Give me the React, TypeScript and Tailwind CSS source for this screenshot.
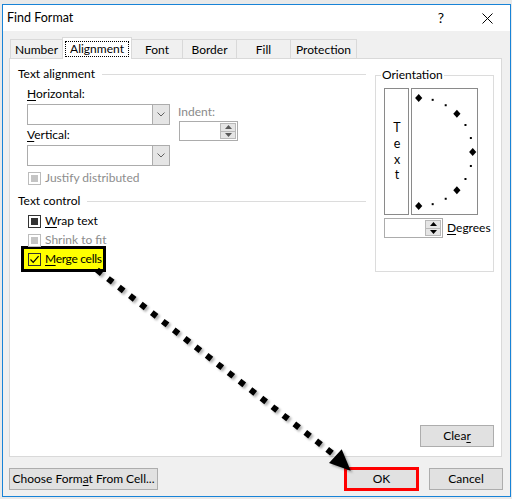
import React from 'react';

const font = "font-['Lato',sans-serif]";

function K({ children }: { children: React.ReactNode }) {
  return <span className="underline decoration-1 underline-offset-[2px]">{children}</span>;
}

type CheckState = 'checked' | 'mixed' | 'off';

function Checkbox({ state, disabled, clear }: { state: CheckState; disabled?: boolean; clear?: boolean }) {
  const frame = disabled ? 'border-[#bcbcbc]' : 'border-[#333333]';
  const fill = clear ? 'bg-transparent' : 'bg-white';
  return (
    <span className={`flex h-[13px] w-[13px] shrink-0 items-center justify-center border ${frame} ${fill}`}>
      {state === 'mixed' && (
        <span className={`h-[7px] w-[7px] ${disabled ? 'bg-[#c4c4c4]' : 'bg-[#333333]'}`} />
      )}
      {state === 'checked' && (
        <svg width="11" height="11" viewBox="0 0 11 11">
          <path d="M1.5 5.5 L4.2 8.3 L9.6 2.2" fill="none" stroke="#000" strokeWidth="1.2" />
        </svg>
      )}
    </span>
  );
}

function Combo() {
  return (
    <div className="flex h-[21px] w-[143px] border border-[#acacac] bg-white">
      <div className="flex-1" />
      <div className="flex w-[17px] items-center justify-center border-l border-[#acacac] bg-[#e5e5e5]">
        <svg width="8" height="5" viewBox="0 0 8 5">
          <path d="M0.5 0.5 L4 4 L7.5 0.5" fill="none" stroke="#606060" strokeWidth="1" />
        </svg>
      </div>
    </div>
  );
}

function SpinBox({ muted }: { muted?: boolean }) {
  const arrow = muted ? '#5a5a5a' : '#000';
  return (
    <div className="flex h-[20px] w-[59px] border border-[#acacac] bg-white">
      <div className="flex-1" />
      <div className="my-px mr-px flex w-[16px] flex-col border border-[#b9b9b9] bg-[#e5e5e5]">
        <div className="flex flex-1 items-center justify-center border-b border-[#b9b9b9]">
          <svg width="7" height="4" viewBox="0 0 7 4">
            <path d="M0 4 L3.5 0 L7 4 Z" fill={arrow} />
          </svg>
        </div>
        <div className="flex flex-1 items-center justify-center">
          <svg width="7" height="4" viewBox="0 0 7 4">
            <path d="M0 0 L7 0 L3.5 4 Z" fill={arrow} />
          </svg>
        </div>
      </div>
    </div>
  );
}

function GroupHeader({ label }: { label: string }) {
  return (
    <div className="flex h-[16px] items-center">
      <span className="leading-[16px]">{label}</span>
      <span className="ml-[7px] h-px flex-1 bg-[#dcdcdc]" />
    </div>
  );
}

function Button({ children, className = '' }: { children: React.ReactNode; className?: string }) {
  return (
    <div
      className={`flex h-[22px] items-center justify-center whitespace-nowrap border border-[#adadad] bg-[#e1e1e1] leading-[16px] ${className}`}
    >
      {children}
    </div>
  );
}

// Semicircle of markers for the orientation dial
function Dial() {
  const cx = 6.7;
  const cy = 63;
  const r = 54;
  const big = [90, 45, 0, -45, -90];
  const small = [75, 60, 30, 15, -15, -30, -60, -75];
  const at = (deg: number) => {
    const a = (deg * Math.PI) / 180;
    return [cx + r * Math.cos(a), cy - r * Math.sin(a)];
  };
  return (
    <svg width="65" height="125" viewBox="0 0 65 125" className="block">
      {big.map((d) => {
        const [x, y] = at(d);
        return (
          <polygon
            key={d}
            points={`${x},${y - 4} ${x + 3.6},${y} ${x},${y + 4} ${x - 3.6},${y}`}
            fill="#000"
          />
        );
      })}
      {small.map((d) => {
        const [x, y] = at(d);
        return <rect key={d} x={x - 1} y={y - 1} width="2" height="2" fill="#000" />;
      })}
    </svg>
  );
}

const tabs = [
  { label: 'Number', w: 'w-[53px]' },
  { label: 'Alignment', w: 'w-[70px]', active: true },
  { label: 'Font', w: 'w-[52px]' },
  { label: 'Border', w: 'w-[55px]' },
  { label: 'Fill', w: 'w-[55px]' },
  { label: 'Protection', w: 'w-[67px]' },
];

export default function App() {
  return (
    <div className={`relative h-[499px] w-[512px] overflow-hidden bg-[#e9e9e9] pl-[2px] pt-[4px] text-[12px] text-black ${font}`}>
      <div className="flex h-[493px] w-[509px] flex-col border border-[#1883d7] bg-[#f0f0f0]">
        {/* title bar */}
        <div className="flex h-[26px] items-center bg-white pl-[4px]">
          <span className="text-[12.5px] leading-[16px]">Find Format</span>
          <span className="ml-auto mr-[38px] text-[14px] leading-[16px]">?</span>
          <svg width="11" height="11" viewBox="0 0 11 11" className="mr-[17px]">
            <path d="M0.5 0.5 L10.5 10.5 M10.5 0.5 L0.5 10.5" stroke="#000" strokeWidth="1" />
          </svg>
        </div>

        {/* tabs */}
        <div className="mt-[6px] flex h-[21px] items-end pl-[7px]">
          {tabs.map((t, i) =>
            t.active ? (
              <div
                key={t.label}
                className={`relative z-10 -mb-px -ml-px flex h-[22px] items-start justify-center border border-b-0 border-[#d9d9d9] bg-white pt-[3px] ${t.w}`}
              >
                <span className="border border-dotted border-black px-[4px] leading-[14px]">{t.label}</span>
              </div>
            ) : (
              <div
                key={t.label}
                className={`flex h-[19px] items-center justify-center border border-b-0 border-[#d9d9d9] pt-[2px] leading-[16px] ${t.w} ${i > 0 ? '-ml-px' : ''}`}
              >
                {t.label}
              </div>
            ),
          )}
        </div>

        {/* tab page */}
        <div className="ml-[6px] flex h-[399px] w-[493px] flex-col border border-[#d9d9d9] bg-white">
          <div className="flex pl-[8px] pt-[7px]">
            <div className="w-[348px]">
              <GroupHeader label="Text alignment" />
              <div className="flex pl-[9px]">
                <div className="w-[143px]">
                  <div className="mt-[4px] leading-[16px]">
                    <K>H</K>orizontal:
                  </div>
                  <div className="mt-[2px]">
                    <Combo />
                  </div>
                  <div className="mt-[2px] leading-[16px]">
                    <K>V</K>ertical:
                  </div>
                  <div className="mt-[2px]">
                    <Combo />
                  </div>
                </div>
                <div className="ml-[8px] mt-[22px]">
                  <div className="leading-[16px] text-[#8a8a8a]">Indent:</div>
                  <div className="ml-px mt-px">
                    <SpinBox muted />
                  </div>
                </div>
              </div>
              <div className="mt-[4px] flex h-[16px] items-center gap-[4px] pl-[10px] text-[#8d8d8d]">
                <Checkbox state="mixed" disabled />
                <span className="leading-[16px]">Justify distributed</span>
              </div>

              <div className="mt-[7px]">
                <GroupHeader label="Text control" />
              </div>
              <div className="mt-[4px] flex h-[16px] items-center gap-[4px] pl-[10px]">
                <Checkbox state="mixed" />
                <span className="leading-[16px]">
                  <K>W</K>rap text
                </span>
              </div>
              <div className="mt-[3px] flex h-[16px] items-center gap-[4px] pl-[10px] text-[#8d8d8d]">
                <Checkbox state="mixed" disabled />
                <span className="leading-[16px]">Shrink to fit</span>
              </div>
              <div className="-mt-[2px] ml-[3px] flex w-fit items-center gap-[4px] whitespace-nowrap border-[3px] border-black bg-[#ffff00] py-[2px] pl-[4px] pr-[1px]">
                <Checkbox state="checked" clear />
                <span className="leading-[16px] tracking-[-0.3px]">
                  <K>M</K>erge cells
                </span>
              </div>
            </div>

            {/* orientation */}
            <div className="relative ml-[9px] mt-[9px] w-[119px] border border-[#dcdcdc] pb-[5px] pl-[8px] pt-[12px]">
              <span className="absolute left-[5px] top-[-9px] bg-white px-px leading-[16px]">Orientation</span>
              <div className="flex">
                <div className="flex h-[127px] w-[25px] items-center justify-center border border-[#8a8a8a]">
                  <span className="text-[12.5px] leading-[14px] tracking-[0.8px] [text-orientation:upright] [writing-mode:vertical-lr]">
                    Text
                  </span>
                </div>
                <div className="ml-[2px] h-[127px] w-[67px] border border-[#8a8a8a]">
                  <Dial />
                </div>
              </div>
              <div className="mt-[3px] flex items-center">
                <SpinBox />
                <span className="ml-[4px] leading-[16px]">
                  <K>D</K>egrees
                </span>
              </div>
            </div>
          </div>

          <div className="flex-1" />
          <div className="flex justify-end pb-[9px] pr-[7px]">
            <Button className="w-[74px]">
              <span>
                Clea<K>r</K>
              </span>
            </Button>
          </div>
        </div>

        {/* dialog buttons */}
        <div className="mt-[10px] flex items-center pl-[6px] pr-[7px]">
          <Button className="w-[149px]">
            <span>
              Choose Form<K>a</K>t From Cell...
            </span>
          </Button>
          <div className="ml-auto flex items-center gap-[10px]">
            <div className="flex h-[24px] w-[75px] items-center justify-center border-[3px] border-[#ff0000] bg-[#e1e1e1] leading-[16px]">
              OK
            </div>
            <Button className="w-[74px]">Cancel</Button>
          </div>
        </div>
      </div>

      {/* pointer from the highlighted option down to OK */}
      <svg width="512" height="499" viewBox="0 0 512 499" className="pointer-events-none absolute left-0 top-0">
        <defs>
          <filter id="soft" x="-10%" y="-10%" width="120%" height="120%">
            <feDropShadow dx="2" dy="2" stdDeviation="1.2" floodColor="#000" floodOpacity="0.3" />
          </filter>
        </defs>
        <g filter="url(#soft)">
          <line x1="97" y1="270" x2="333" y2="454" stroke="#000" strokeWidth="6" strokeDasharray="6 7.9" />
          <polygon points="329,463 341.7,449.3 350.7,470.7" fill="#000" />
        </g>
      </svg>
    </div>
  );
}
